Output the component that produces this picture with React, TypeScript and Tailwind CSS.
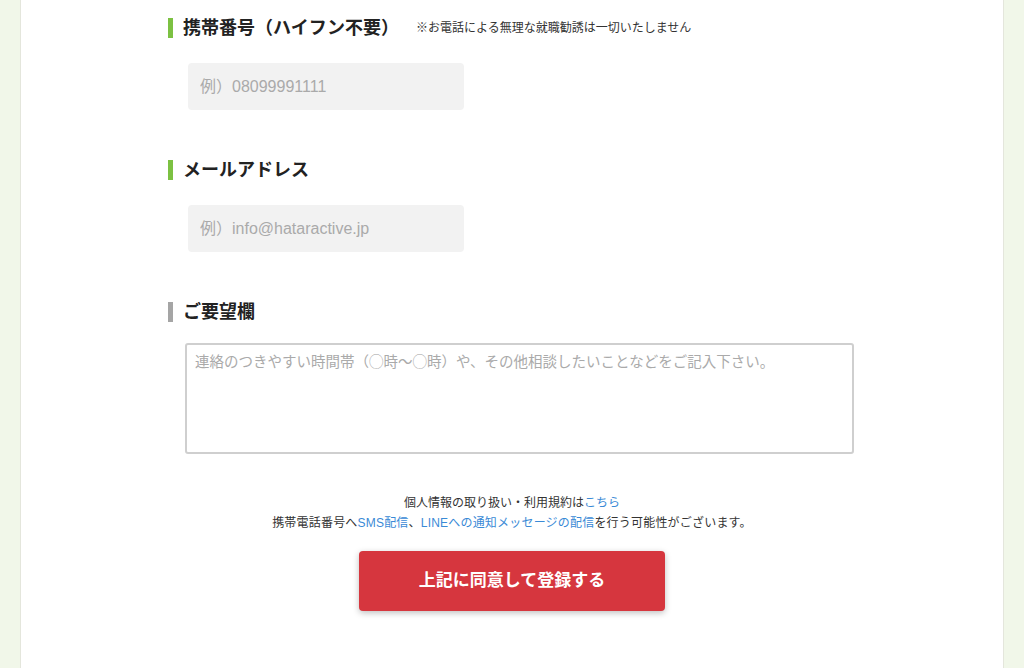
const font = "font-['Liberation_Sans','Noto_Sans_CJK_JP',sans-serif]";

function Heading({ label, required = true, note }: { label: string; required?: boolean; note?: string }) {
  return (
    <div className="flex items-center h-[20px]">
      <span className={`w-[5px] h-[20px] ${required ? 'bg-[#7cc142]' : 'bg-[#a5a5a5]'}`} />
      <span className="ml-[10px] text-[18px] font-bold text-[#222] leading-[20px]">{label}</span>
      {note && <span className="ml-[17px] text-[12px] text-[#333] leading-[20px]">{note}</span>}
    </div>
  );
}

export default function App() {
  return (
    <div className={`min-h-screen bg-[#f1f7e9] px-[20px] ${font}`}>
      <div className="min-h-screen bg-white border-x border-[#e4e6dc] pt-[18px] pb-[40px]">
        <div className="pl-[147px]">
          <Heading label="携帯番号（ハイフン不要）" note="※お電話による無理な就職勧誘は一切いたしません" />
          <input
            className="mt-[25px] ml-[20px] block w-[276px] h-[47px] rounded-[4px] bg-[#f2f2f2] px-[12px] text-[16px] text-[#333] placeholder:text-[#aaa] outline-none"
            placeholder="例）08099991111"
          />

          <div className="mt-[50px]">
            <Heading label="メールアドレス" />
          </div>
          <input
            className="mt-[25px] ml-[20px] block w-[276px] h-[47px] rounded-[4px] bg-[#f2f2f2] px-[12px] text-[16px] text-[#333] placeholder:text-[#aaa] outline-none"
            placeholder="例）info@hataractive.jp"
          />

          <div className="mt-[50px]">
            <Heading label="ご要望欄" required={false} />
          </div>
          <textarea
            className="mt-[21px] ml-[17px] block w-[669px] h-[111px] rounded-[3px] border-2 border-[#cfcfcf] px-[8px] py-[6px] text-[14.5px] leading-[22px] text-[#333] placeholder:text-[#aaa] outline-none resize-none"
            placeholder="連絡のつきやすい時間帯（◯時〜◯時）や、その他相談したいことなどをご記入下さい。"
          />
        </div>

        <div className="mt-[39px] text-center text-[12px] leading-[20px] text-[#333]">
          <p>
            個人情報の取り扱い・利用規約は<a className="text-[#3a8ad6]">こちら</a>
          </p>
          <p className="tracking-[0.2px]">
            携帯電話番号へ<a className="text-[#3a8ad6]">SMS配信</a>、<a className="text-[#3a8ad6]">LINEへの通知メッセージの配信</a>を行う可能性がございます。
          </p>
        </div>

        <div className="mt-[18px] flex justify-center">
          <button className="w-[306px] h-[60px] rounded-[4px] bg-[#d6363e] text-white text-[17px] font-bold shadow-[0_2px_6px_rgba(0,0,0,0.25)]">
            上記に同意して登録する
          </button>
        </div>
      </div>
    </div>
  );
}
